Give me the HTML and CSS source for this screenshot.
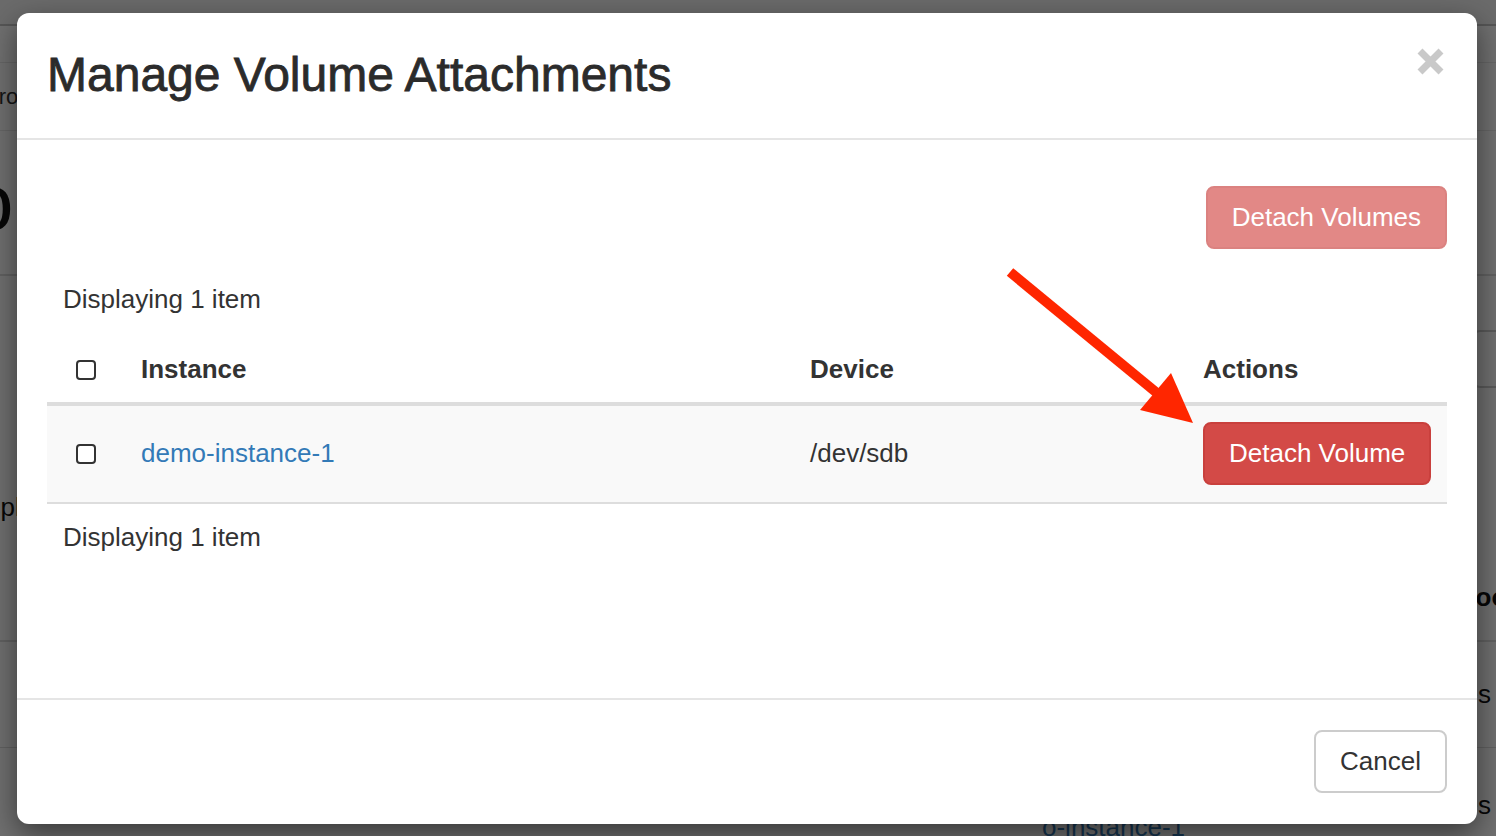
FILE: index.html
```html
<!DOCTYPE html>
<html lang="en">
<head>
    <meta charset="UTF-8">
    <title>Manage Volume Attachments</title>
    <link rel="stylesheet" href="styles.css">
</head>
<body>
<!-- the volumes page behind the dialog -->
<div class="page">
    <div class="page-nav"></div>
    <div class="page-crumb"></div>
    <div class="page-project"><span class="cut">Project</span></div>
    <div class="page-title"><span class="cut-big">Vo</span></div>
    <div class="page-tools"><span class="page-btn">Create Volume</span></div>
    <div class="page-info"><span class="cut-info">Displaying</span></div>
    <div class="page-head"><b class="cut-right">Bootable</b></div>
    <div class="page-row"><span class="cut-right">Yes</span></div>
    <div class="page-row page-row-last"><span class="cut-right">Yes</span></div>
    <div class="page-link"><a href="#">o-instance-1</a></div>
</div>
<div class="backdrop"></div>

<div class="modal">
    <div class="modal-header">
        <h3 class="modal-title">Manage Volume Attachments</h3>
        <a href="#" class="close">
            <svg width="27" height="27" viewBox="0 0 27 27">
                <path d="M3 3 L24 24 M24 3 L3 24" stroke="#c9c9c9" stroke-width="7" fill="none"/>
            </svg>
        </a>
    </div>
    <div class="modal-body">
        <div class="toolbar">
            <button class="btn btn-danger disabled">Detach Volumes</button>
        </div>
        <div class="caption">Displaying 1 item</div>
        <table class="table">
            <colgroup>
                <col width="78">
                <col width="669">
                <col width="393">
                <col width="260">
            </colgroup>
            <thead>
            <tr>
                <th class="col-check"><span class="check"></span></th>
                <th>Instance</th>
                <th>Device</th>
                <th>Actions</th>
            </tr>
            </thead>
            <tbody>
            <tr>
                <td class="col-check"><span class="check"></span></td>
                <td><a href="#">demo-instance-1</a></td>
                <td>/dev/sdb</td>
                <td><button class="btn btn-danger">Detach Volume</button></td>
            </tr>
            </tbody>
        </table>
        <div class="caption caption-bottom">Displaying 1 item</div>
    </div>
    <div class="modal-footer">
        <button class="btn btn-default">Cancel</button>
    </div>
</div>

<svg class="arrow" width="200" height="170" viewBox="0 0 200 170">
    <line x1="10" y1="12" x2="157" y2="133" stroke="#ff2600" stroke-width="10"/>
    <polygon points="140,150 171,113 193,163" fill="#ff2600"/>
</svg>
</body>
</html>
```

FILE: styles.css
```css
*{
    margin: 0;
    padding: 0;
    box-sizing: border-box;
}
body{
    font-family: "Liberation Sans", Arial, sans-serif;
    color: #333;
    overflow: hidden;
}
a{
    color: #337ab7;
    text-decoration: none;
}

/* page behind */
.page{
    position: fixed;
    left: 0;
    top: 0;
    width: 100%;
    height: 100%;
    background: #fff;
    overflow: hidden;
    font-size: 26px;
    white-space: nowrap;
}
.page-nav{
    height: 26px;
    background: #f3f3f3;
    border-bottom: 2px solid #c4c4c4;
}
.page-crumb{
    height: 37px;
    border-bottom: 1px solid #e8e8e8;
}
.page-project{
    height: 68px;
    display: flex;
    align-items: center;
    border-bottom: 1px solid #e8e8e8;
    font-size: 22px;
}
.page-project .cut{
    margin-left: -16px;
}
.page-title{
    height: 145px;
    display: flex;
    align-items: center;
    border-bottom: 2px solid #ddd;
    font-size: 80px;
    color: #111;
}
.page-title .cut-big{
    margin-left: -80px;
}
.page-tools{
    height: 184px;
    display: flex;
    justify-content: flex-end;
    align-items: flex-start;
    padding-top: 54px;
}
.page-btn{
    height: 58px;
    padding: 0 24px;
    line-height: 54px;
    border: 2px solid #ccc;
    border-radius: 8px;
    margin-right: -200px;
}
.page-info{
    height: 95px;
    display: flex;
    align-items: center;
}
.page-info .cut-info{
    margin-left: -37px;
    color: #111;
}
.page-head{
    height: 87px;
    display: flex;
    align-items: center;
    justify-content: flex-end;
    border-bottom: 2px solid #ddd;
}
.page-row{
    height: 106px;
    display: flex;
    align-items: center;
    justify-content: flex-end;
    border-bottom: 1px solid #ddd;
}
.cut-right{
    margin-right: 5px;
    color: #111;
}
.page-head .cut-right{
    margin-right: -72px;
}
.page-row-last{
    height: 88px;
    align-items: flex-start;
    padding-top: 42px;
    border-bottom: none;
}
.page-link{
    margin-top: -24px;
    padding-left: 1042px;
}
.backdrop{
    position: fixed;
    left: 0;
    top: 0;
    width: 100%;
    height: 100%;
    background: rgba(0, 0, 0, 0.56);
}

/* dialog */
.modal{
    position: fixed;
    left: 17px;
    top: 13px;
    width: 1460px;
    background: #fff;
    border-radius: 12px;
    box-shadow: 0 10px 30px rgba(0, 0, 0, 0.5);
    font-size: 26px;
    line-height: 37px;
    color: #333;
}
.modal-header{
    display: flex;
    justify-content: space-between;
    align-items: flex-start;
    padding: 36px 33px 37px 30px;
    border-bottom: 2px solid #e5e5e5;
}
.modal-title{
    font-size: 48px;
    line-height: 52px;
    font-weight: 500;
    color: #2b2b2b;
    -webkit-text-stroke: 0.8px #2b2b2b;
}
.close{
    display: block;
    width: 27px;
    height: 27px;
    margin-top: -1px;
}
.close svg{
    display: block;
}
.modal-body{
    height: 558px;
    padding: 46px 30px 0 30px;
}
.toolbar{
    display: flex;
    justify-content: flex-end;
}
.btn{
    font-family: inherit;
    font-size: 26px;
    line-height: 37px;
    padding: 11px 24px;
    border: 2px solid transparent;
    border-radius: 8px;
    white-space: nowrap;
    cursor: pointer;
}
.btn-danger{
    background: #d34a47;
    border-color: #c9403d;
    color: #fff;
}
.btn-danger.disabled{
    opacity: 0.65;
}
.btn-default{
    background: #fff;
    border-color: #ccc;
    color: #333;
}
.caption{
    padding-left: 16px;
    margin-top: 32px;
}
.caption-bottom{
    margin-top: 0;
    padding-top: 15px;
}
.table{
    width: 1400px;
    margin-top: 15px;
    table-layout: fixed;
    border-collapse: separate;
    border-spacing: 0;
}
.table th{
    text-align: left;
    padding: 18px 16px 14px 16px;
    font-weight: bold;
    border-bottom: 4px solid #ddd;
}
.table td{
    padding: 16px 16px 17px 16px;
    background: #f9f9f9;
    border-bottom: 2px solid #ddd;
    vertical-align: middle;
}
.table .col-check{
    text-align: center;
    vertical-align: middle;
}
.check{
    display: block;
    width: 20px;
    height: 20px;
    margin: 0 auto;
    border: 2px solid #333;
    border-radius: 4px;
    background: #fff;
}
.modal-footer{
    display: flex;
    justify-content: flex-end;
    padding: 30px 30px 31px 30px;
    border-top: 2px solid #e5e5e5;
}
.arrow{
    position: fixed;
    left: 1000px;
    top: 260px;
}
```
